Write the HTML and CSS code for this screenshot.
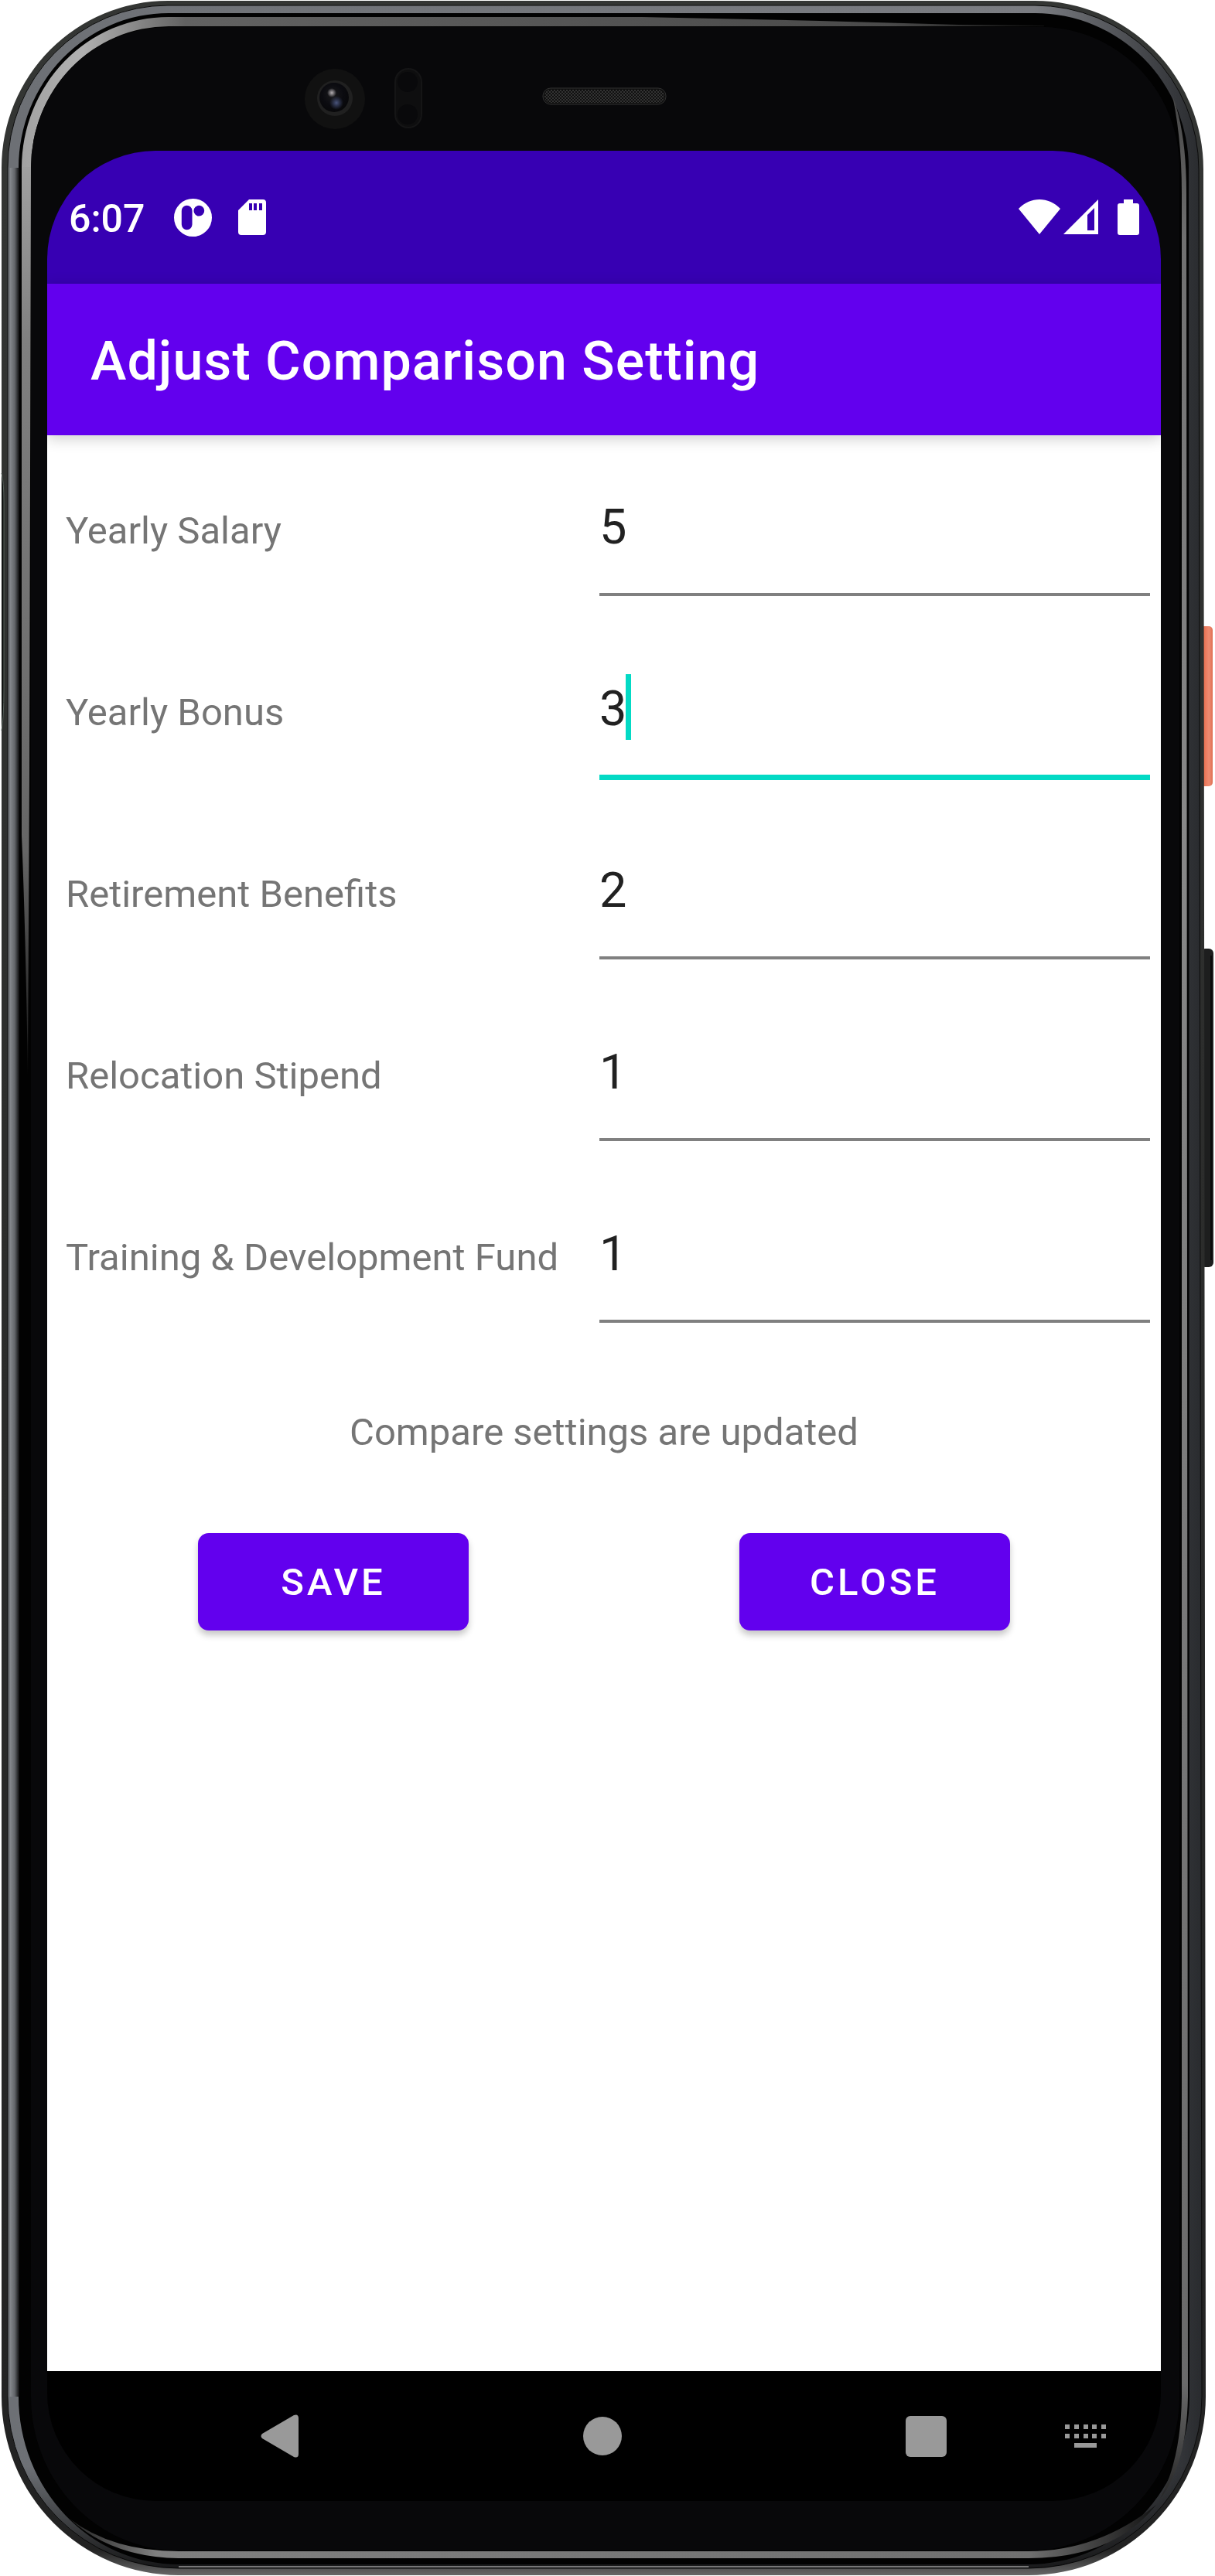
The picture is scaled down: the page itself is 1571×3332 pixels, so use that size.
FILE: index.html
```html
<!DOCTYPE html>
<html lang="en">
<head>
<meta charset="utf-8">
<meta name="viewport" content="width=device-width, initial-scale=1">
<title>Adjust Comparison Setting</title>
<link rel="stylesheet" href="styles.css">
</head>
<body>
<div class="phone">
  <svg class="phone-body" viewBox="0 0 1571 3332" preserveAspectRatio="none" aria-hidden="true">
    <defs>
      <linearGradient id="shell" x1="0" y1="0" x2="0" y2="1">
        <stop offset="0" stop-color="#343634"/><stop offset=".99" stop-color="#222"/><stop offset="1" stop-color="#666"/>
      </linearGradient>
      <linearGradient id="rim" x1="0" y1="0" x2="1" y2="0">
        <stop offset="0" stop-color="#6d7075"/><stop offset=".86" stop-color="#7b7d82"/><stop offset=".98" stop-color="#34363a"/><stop offset="1" stop-color="#292b2e"/>
      </linearGradient>
      <linearGradient id="rimFall" x1="0" y1="0" x2="0" y2="1">
        <stop offset=".96" stop-color="#000" stop-opacity="0"/><stop offset="1" stop-color="#000" stop-opacity=".8"/>
      </linearGradient>
      <linearGradient id="rimLeft" x1="0" y1="0" x2="1" y2="0">
        <stop offset="0" stop-color="#3d4043"/><stop offset=".2" stop-color="#85888d"/><stop offset=".6" stop-color="#63666a"/><stop offset="1" stop-color="#0c0c0d"/>
      </linearGradient>
      <linearGradient id="glintTop" gradientUnits="userSpaceOnUse" x1="28" y1="0" x2="1350" y2="0">
        <stop offset="0" stop-color="#a2a2a2"/><stop offset=".06" stop-color="#b0b0b0"/><stop offset=".16" stop-color="#626262"/><stop offset=".85" stop-color="#4a4a4a"/><stop offset="1" stop-color="#111"/>
      </linearGradient>
      <linearGradient id="glintLeft" gradientUnits="userSpaceOnUse" x1="0" y1="200" x2="0" y2="1400">
        <stop offset="0" stop-color="#a2a2a2"/><stop offset=".2" stop-color="#808080"/><stop offset=".75" stop-color="#666"/><stop offset="1" stop-color="#111"/>
      </linearGradient>
      <linearGradient id="glintRight" gradientUnits="userSpaceOnUse" x1="0" y1="120" x2="0" y2="3240">
        <stop offset="0" stop-color="#444"/><stop offset=".06" stop-color="#707070"/><stop offset=".3" stop-color="#888"/><stop offset=".95" stop-color="#6a6a6a"/><stop offset="1" stop-color="#222"/>
      </linearGradient>
      <linearGradient id="glintBottom" gradientUnits="userSpaceOnUse" x1="90" y1="0" x2="1500" y2="0">
        <stop offset="0" stop-color="#222"/><stop offset=".08" stop-color="#808080"/><stop offset=".88" stop-color="#707070"/><stop offset="1" stop-color="#111"/>
      </linearGradient>
      <linearGradient id="power" x1="0" y1="0" x2="1" y2="0">
        <stop offset="0" stop-color="#d9573a"/><stop offset=".3" stop-color="#e97253"/><stop offset=".7" stop-color="#ef8c72"/><stop offset="1" stop-color="#df6f53"/>
      </linearGradient>
      <radialGradient id="lens" cx=".45" cy=".4" r=".6">
        <stop offset="0" stop-color="#1a1a1c"/><stop offset=".6" stop-color="#0b0b10"/><stop offset="1" stop-color="#08080a"/>
      </radialGradient>
      <radialGradient id="flare"><stop offset="0" stop-color="#b5b0b4"/><stop offset="1" stop-color="#b5b0b4" stop-opacity="0"/></radialGradient>
      <radialGradient id="tint"><stop offset="0" stop-color="#4a557d"/><stop offset="1" stop-color="#3a4568" stop-opacity="0"/></radialGradient>
      <pattern id="mesh" width="4" height="4" patternUnits="userSpaceOnUse">
        <path d="M0 1h2M2 3h2" stroke="#555" stroke-width="1"/>
      </pattern>
    </defs>
    <rect x="1552" y="810" width="16" height="207" rx="5" fill="url(#power)"/>
    <rect x="1552" y="1227" width="17" height="412" rx="6" fill="#1d1e1e"/>
    <path d="M1566 1236V1630" stroke="#090909" stroke-width="2"/>
    <path d="M217 1H1338A218 218 0 0 1 1556 219L1559 3100A229 231 0 0 1 1330 3331H231A229 231 0 0 1 2 3100V217A215 216 0 0 1 217 1Z" fill="url(#shell)"/>
    <path d="M2 612Q5 622 5 650V890Q5 930 2 945" fill="#101211" stroke="#56605b" stroke-width="1"/>
    <path d="M217 7H1338A212 212 0 0 1 1550 219L1554 3100A224 222 0 0 1 1330 3322H231A221 222 0 0 1 10 3100V217A207 210 0 0 1 217 7Z" fill="url(#rim)" stroke="#0b0b0b" stroke-width="1"/>
    <path d="M217 7H1338A212 212 0 0 1 1550 219L1554 3100A224 222 0 0 1 1330 3322H231A221 222 0 0 1 10 3100V217A207 210 0 0 1 217 7Z" fill="url(#rimFall)"/>
    <path d="M231 3320H1330" stroke="#777" stroke-width="2"/>
    <path d="M218 17H1338A199 200 0 0 1 1537 217L1538 3100A208 217 0 0 1 1330 3317H231A207 217 0 0 1 24 3100V217A194 200 0 0 1 218 17Z" fill="#020202"/>
    <rect x="10" y="217" width="15" height="2883" fill="url(#rimLeft)"/>
    <path d="M28 217A190 195 0 0 1 218 22H830L1060 27L1240 32L1350 33V34H218A178 183 0 0 0 40 217Z" fill="url(#glintTop)"/>
    <path d="M28 216H40L38 1000L36 1390Q33 1200 28 1080Z" fill="url(#glintLeft)"/>
    <path d="M1516 124Q1534 170 1534 250L1536 3100Q1534 3190 1500 3232Q1527 3180 1528 3100V250Q1528 180 1516 124Z" fill="url(#glintRight)"/>
    <path d="M90 3258Q145 3300 231 3300H1330Q1420 3300 1495 3240Q1440 3309 1330 3309H231Q145 3308 90 3258Z" fill="url(#glintBottom)"/>
    <path d="M218 35H1338A180 182 0 0 1 1525 217V3100A195 199 0 0 1 1330 3299H231A191 199 0 0 1 40 3100V217A178 182 0 0 1 218 35Z" fill="#08080a"/>
    <circle cx="433" cy="128" r="39" fill="#111"/>
    <circle cx="433" cy="127" r="23" fill="#202020"/>
    <circle cx="432" cy="126" r="19" fill="url(#lens)"/>
    <circle cx="435" cy="133" r="9" fill="url(#tint)"/>
    <circle cx="429" cy="120" r="6" fill="url(#flare)"/>
    <rect x="511" y="89" width="34" height="76" rx="17" fill="#0e0e0f" stroke="#151516" stroke-width="2"/>
    <circle cx="527" cy="106" r="13" fill="#09090b"/><circle cx="527" cy="148" r="13" fill="#09090b"/>
    <rect x="702" y="114" width="159" height="21" rx="10" fill="#101010" stroke="#303030" stroke-width="1"/>
    <rect x="704" y="116" width="155" height="17" rx="8" fill="url(#mesh)"/>
  </svg>

  <div class="screen">
    <div class="status-bar">
      <span class="clock">6:07</span>
      <svg class="icon-app" viewBox="0 0 50 50" preserveAspectRatio="none" aria-hidden="true"><path fill-rule="evenodd" fill="#fff" d="M25 0a25 25 0 1 1 0 50a25 25 0 1 1 0-50ZM17 9a7 7 0 0 0-7 7v18a7 7 0 0 0 14 0V16a7 7 0 0 0-7-7ZM33 9a7 7 0 1 0 0 14a7 7 0 1 0 0-14Z"/></svg>
      <svg class="icon-card" viewBox="0 0 36 46" aria-hidden="true"><path fill-rule="evenodd" fill="#fff" d="M14 0H32a4 4 0 0 1 4 4V42a4 4 0 0 1-4 4H4a4 4 0 0 1-4-4V14ZM14 5v9h4V5ZM20 5v9h4V5ZM27 5v9h4V5Z"/></svg>
      <span class="spacer"></span>
      <svg class="icon-wifi" viewBox="0 0 54 46" aria-hidden="true"><path fill="#fff" d="M0 12C15-4 39-4 54 12L27 45Z"/></svg>
      <svg class="icon-signal" viewBox="0 0 46 46" aria-hidden="true"><path fill-rule="evenodd" fill="#fff" d="M45 0V45H0ZM40 11L31 20V40H40Z"/></svg>
      <svg class="icon-battery" viewBox="0 0 28 46" aria-hidden="true"><path fill="#fff" d="M8 0h12v5h5a3 3 0 0 1 3 3v35a3 3 0 0 1-3 3H3a3 3 0 0 1-3-3V8a3 3 0 0 1 3-3h5Z"/></svg>
    </div>
    <header class="app-bar"><h1 class="title">Adjust Comparison Setting</h1></header>
    <main class="content">
      <form class="settings">
        <div class="row">
          <label class="label" for="salary">Yearly Salary</label>
          <div class="field"><input class="input" id="salary" type="text" inputmode="numeric" value="5"></div>
        </div>
        <div class="row">
          <label class="label" for="bonus">Yearly Bonus</label>
          <div class="field field-active"><input class="input" id="bonus" type="text" inputmode="numeric" value="3"><span class="caret"></span></div>
        </div>
        <div class="row">
          <label class="label" for="retirement">Retirement Benefits</label>
          <div class="field"><input class="input" id="retirement" type="text" inputmode="numeric" value="2"></div>
        </div>
        <div class="row">
          <label class="label" for="relocation">Relocation Stipend</label>
          <div class="field"><input class="input" id="relocation" type="text" inputmode="numeric" value="1"></div>
        </div>
        <div class="row">
          <label class="label" for="training">Training &amp; Development Fund</label>
          <div class="field"><input class="input" id="training" type="text" inputmode="numeric" value="1"></div>
        </div>
        <p class="message" role="status">Compare settings are updated</p>
        <div class="actions">
          <button class="button" type="button">SAVE</button>
          <button class="button" type="button">CLOSE</button>
        </div>
      </form>
    </main>
    <nav class="nav-bar" aria-label="System navigation">
      <button class="nav-button" type="button" aria-label="Back"><svg width="50" height="56" viewBox="0 0 50 56"><path fill="#999" d="M43 1Q49-1 49 5V51Q49 57 43 55L2 31Q-1 28 2 25Z"/></svg></button>
      <button class="nav-button nav-main" type="button" aria-label="Home"><svg width="50" height="50" viewBox="0 0 50 50"><circle cx="25" cy="25" r="25" fill="#999"/></svg></button>
      <button class="nav-button nav-main" type="button" aria-label="Recent apps"><svg width="53" height="53" viewBox="0 0 53 53"><rect width="53" height="53" rx="6" fill="#999"/></svg></button>
      <button class="nav-button nav-keyboard" type="button" aria-label="Switch keyboard"><svg width="54" height="30" viewBox="0 0 54 30"><path fill="#999" d="M0 0h6v6H0zM12 0h6v6h-6zM24 0h6v6h-6zM35 0h6v6h-6zM47 0h6v6h-6zM0 12h6v6H0zM12 12h6v6h-6zM24 12h6v6h-6zM35 12h6v6h-6zM47 12h6v6h-6zM12 24h29v6H12z"/></svg></button>
    </nav>
  </div>
</div>
</body>
</html>
```

FILE: styles.css
```css
* {
  box-sizing: border-box;
}

body {
  margin: 0;
  background: #fff;
  font-family: Roboto, "Liberation Sans", sans-serif;
}

.phone {
  position: relative;
  display: flex;
  min-height: 100vh;
  padding: 195px 70px 97px 61px;
}

/* The handset drawing lies behind the screen. */
.phone-body {
  position: absolute;
  inset: 0;
  width: 100%;
  height: 100%;
}

.screen {
  position: relative;
  flex: 1;
  display: flex;
  flex-direction: column;
  border-radius: 140px;
  overflow: hidden;
}

.status-bar {
  display: flex;
  align-items: center;
  height: 172px;
  padding: 0 28px;
  background: #3700b3;
  color: #fff;
}

.clock {
  padding-top: 4px;
  font-size: 50px;
  font-weight: 500;
  line-height: 60px;
}

.icon-app {
  width: 49px;
  height: 49px;
  margin-left: 38px;
}

.icon-card {
  width: 36px;
  height: 46px;
  margin-left: 34px;
}

.spacer {
  flex: 1;
}

.icon-wifi {
  width: 54px;
  height: 46px;
}

.icon-signal {
  width: 46px;
  height: 46px;
  margin-left: 4px;
}

.icon-battery {
  width: 28px;
  height: 46px;
  margin-left: 24px;
}

.app-bar {
  position: relative;
  display: flex;
  align-items: center;
  height: 196px;
  padding: 4px 56px 0;
  background: #6200ee;
  color: #fff;
  box-shadow: 0 4px 18px rgba(0, 0, 0, 0.2);
}

.title {
  margin: 0;
  font-size: 70px;
  font-weight: 500;
  line-height: 84px;
  letter-spacing: 1px;
}

.content {
  flex: 1;
  background: #fff;
}

.row {
  display: grid;
  grid-template-columns: 1fr 726px;
  align-items: baseline;
  height: 235px;
  padding-top: 62px;
}

.label {
  padding-left: 24px;
  color: #757575;
  font-size: 49px;
  line-height: 60px;
}

.field {
  position: relative;
  height: 146px;
  margin-right: 14px;
  border-bottom: 4px solid #808080;
}

.field-active {
  height: 149px;
  border-bottom: 7px solid #03dac5;
}

.input {
  display: block;
  width: 100%;
  height: 114px;
  padding: 0;
  border: 0;
  outline: 0;
  background: transparent;
  color: #212121;
  font: 400 63px/114px Roboto, "Liberation Sans", sans-serif;
}

.caret {
  position: absolute;
  left: 34px;
  top: 12px;
  width: 7px;
  height: 85px;
  background: #03dac5;
}

.message {
  margin: 85px 0 100px;
  color: #757575;
  font-size: 49px;
  line-height: 60px;
  text-align: center;
}

.actions {
  display: flex;
  justify-content: space-between;
  padding: 0 195px;
}

.button {
  width: 350px;
  height: 126px;
  padding: 2px 0 0;
  border: 0;
  border-radius: 14px;
  background: #6200ee;
  box-shadow: 0 6px 8px rgba(0, 0, 0, 0.22);
  color: #fff;
  font: 500 49px/60px Roboto, "Liberation Sans", sans-serif;
  letter-spacing: 4px;
}

.nav-bar {
  display: flex;
  align-items: center;
  height: 168px;
  padding: 0 70px 0 276px;
  background: #000;
}

.nav-button {
  display: flex;
  justify-content: center;
  padding: 0;
  border: 0;
  background: transparent;
}

.nav-main {
  margin-left: 367px;
}

.nav-keyboard {
  margin-left: auto;
}
```
